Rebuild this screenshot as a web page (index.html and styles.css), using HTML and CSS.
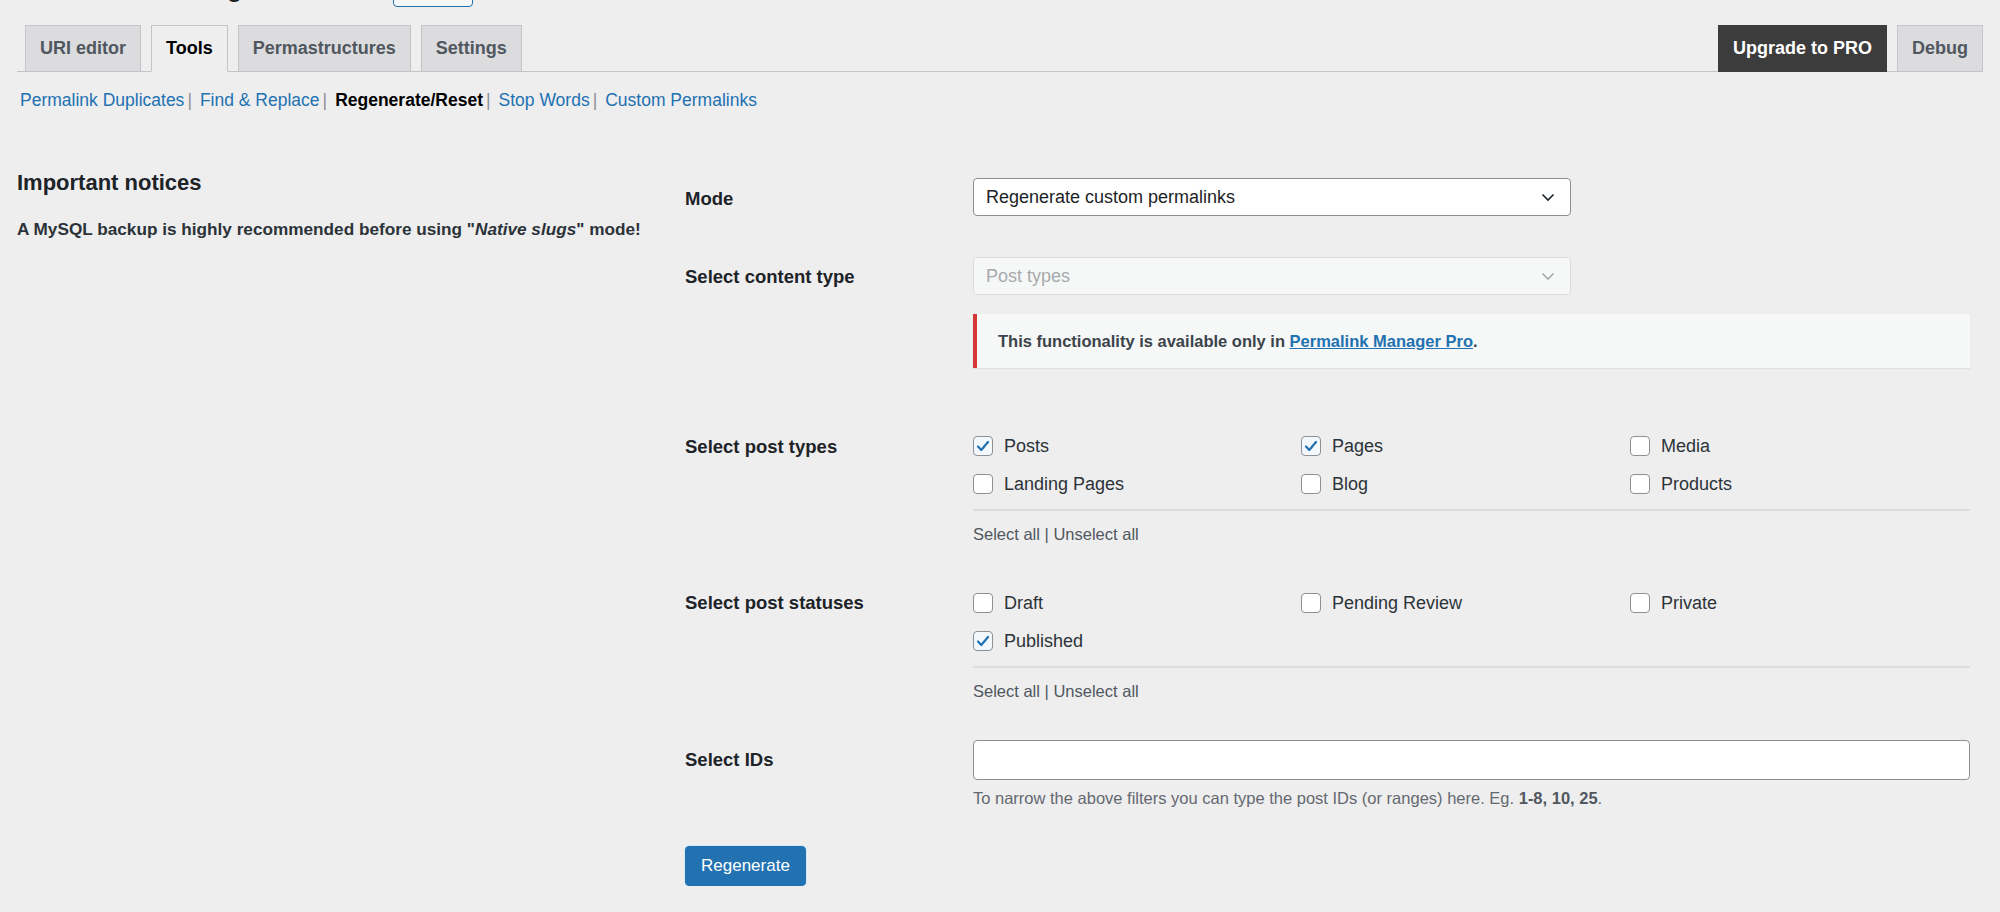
FILE: index.html
```html
<!DOCTYPE html>
<html lang="en">
<head>
    <meta charset="UTF-8">
    <meta name="viewport" content="width=device-width, initial-scale=1.0">
    <title>Permalink Manager - Tools</title>
    <link rel="stylesheet" href="styles.css">
</head>
<body>
<div class="wrap">
    <h1 class="page-title">Permalink Manager <span class="byline">by Maciej Bis</span> <a href="#" class="title-action">Go Pro</a></h1>

    <div class="tab-bar">
        <nav class="tabs">
            <a href="#" class="tab">URI editor</a>
            <a href="#" class="tab active">Tools</a>
            <a href="#" class="tab">Permastructures</a>
            <a href="#" class="tab">Settings</a>
        </nav>
        <div class="tab-actions">
            <a href="#" class="tab tab-pro">Upgrade to PRO</a>
            <a href="#" class="tab">Debug</a>
        </div>
    </div>

    <ul class="subnav">
        <li><a href="#">Permalink Duplicates</a><span class="sep">|</span></li>
        <li><a href="#">Find &amp; Replace</a><span class="sep">|</span></li>
        <li><a href="#" class="current">Regenerate/Reset</a><span class="sep">|</span></li>
        <li><a href="#">Stop Words</a><span class="sep">|</span></li>
        <li><a href="#">Custom Permalinks</a></li>
    </ul>

    <div class="columns">
        <aside class="notices">
            <h2>Important notices</h2>
            <p>A MySQL backup is highly recommended before using "<em>Native slugs</em>" mode!</p>
        </aside>

        <form class="tool-form">
            <div class="form-row row-mode">
                <div class="row-label">Mode</div>
                <div class="row-field">
                    <div class="select">
                        <span>Regenerate custom permalinks</span>
                        <svg width="14" height="9" viewBox="0 0 14 9"><path d="M1.5 1.5 7 7l5.5-5.5" fill="none" stroke="currentColor" stroke-width="1.6"/></svg>
                    </div>
                </div>
            </div>

            <div class="form-row row-content">
                <div class="row-label">Select content type</div>
                <div class="row-field">
                    <div class="select disabled">
                        <span>Post types</span>
                        <svg width="14" height="9" viewBox="0 0 14 9"><path d="M1.5 1.5 7 7l5.5-5.5" fill="none" stroke="currentColor" stroke-width="1.6"/></svg>
                    </div>
                    <div class="notice">
                        This functionality is available only in <a href="#">Permalink Manager Pro</a>.
                    </div>
                </div>
            </div>

            <div class="form-row row-checks">
                <div class="row-label">Select post types</div>
                <div class="row-field">
                    <div class="check-grid">
                        <label class="check"><span class="box checked"><svg width="14" height="12" viewBox="0 0 14 12"><path d="M2 6.5 5.3 10 12 2" fill="none" stroke="currentColor" stroke-width="2.2" stroke-linecap="round" stroke-linejoin="round"/></svg></span>Posts</label>
                        <label class="check"><span class="box checked"><svg width="14" height="12" viewBox="0 0 14 12"><path d="M2 6.5 5.3 10 12 2" fill="none" stroke="currentColor" stroke-width="2.2" stroke-linecap="round" stroke-linejoin="round"/></svg></span>Pages</label>
                        <label class="check"><span class="box"></span>Media</label>
                        <label class="check"><span class="box"></span>Landing Pages</label>
                        <label class="check"><span class="box"></span>Blog</label>
                        <label class="check"><span class="box"></span>Products</label>
                    </div>
                    <div class="select-links"><a href="#">Select all</a> | <a href="#">Unselect all</a></div>
                </div>
            </div>

            <div class="form-row row-statuses">
                <div class="row-label">Select post statuses</div>
                <div class="row-field">
                    <div class="check-grid">
                        <label class="check"><span class="box"></span>Draft</label>
                        <label class="check"><span class="box"></span>Pending Review</label>
                        <label class="check"><span class="box"></span>Private</label>
                        <label class="check"><span class="box checked"><svg width="14" height="12" viewBox="0 0 14 12"><path d="M2 6.5 5.3 10 12 2" fill="none" stroke="currentColor" stroke-width="2.2" stroke-linecap="round" stroke-linejoin="round"/></svg></span>Published</label>
                    </div>
                    <div class="select-links"><a href="#">Select all</a> | <a href="#">Unselect all</a></div>
                </div>
            </div>

            <div class="form-row row-ids">
                <div class="row-label">Select IDs</div>
                <div class="row-field">
                    <input type="text" class="text-input">
                    <p class="help">To narrow the above filters you can type the post IDs (or ranges) here. Eg. <strong>1-8, 10, 25</strong>.</p>
                </div>
            </div>

            <button type="button" class="btn-primary">Regenerate</button>
        </form>
    </div>
</div>
</body>
</html>
```

FILE: styles.css
```css
* {
    margin: 0;
    padding: 0;
    box-sizing: border-box;
}
body {
    background: #eeeeef;
    color: #1d2327;
    font-family: "Liberation Sans", Arial, sans-serif;
    font-size: 17px;
    overflow: hidden;
}
a {
    color: #2271b1;
    text-decoration: none;
}

.wrap {
    padding: 0 17px;
}

/* page title sits mostly above the fold */
.page-title {
    height: 36px;
    font-size: 29px;
    font-weight: 400;
    line-height: 36px;
    margin-top: -32px;
    margin-bottom: 21px;
    white-space: nowrap;
}
.byline {
    font-size: 17px;
    color: #646970;
}
.title-action {
    display: inline-block;
    position: relative;
    top: 1px;
    margin-left: 8px;
    padding: 4px 12px;
    line-height: 20px;
    font-size: 17px;
    border: 1px solid #2271b1;
    border-radius: 4px;
    background: #f6f7f7;
}

/* tabs */
.tab-bar {
    display: flex;
    justify-content: space-between;
    align-items: flex-end;
    border-bottom: 1px solid #c3c4c7;
}
.tabs,
.tab-actions {
    display: flex;
    gap: 10px;
}
.tabs {
    padding-left: 8px;
}
.tab {
    display: block;
    margin-bottom: -1px;
    padding: 10px 14px;
    line-height: 25px;
    font-size: 18px;
    font-weight: 700;
    color: #50575e;
    background: #dcdcde;
    border: 1px solid #c3c4c7;
}
.tab.active {
    color: #000;
    background: #eeeeef;
    border-bottom-color: #eeeeef;
}
.tab.tab-pro {
    color: #fff;
    background: #3c3c3c;
    border-color: #3c3c3c;
}

/* sub navigation */
.subnav {
    list-style: none;
    display: flex;
    margin-top: 16px;
    padding-left: 3px;
    line-height: 24px;
    font-size: 17.5px;
}
.subnav .sep {
    color: #8c8f94;
    margin: 0 8px 0 3px;
}
.subnav .current {
    color: #000;
    font-weight: 700;
}

/* two column layout */
.columns {
    display: grid;
    grid-template-columns: 668px 1fr;
    margin-top: 52px;
}
.notices {
    padding-top: 5px;
}
.notices h2 {
    font-size: 22px;
    line-height: 28px;
    font-weight: 700;
    margin-bottom: 20px;
}
.notices p {
    font-size: 17.2px;
    line-height: 24px;
    font-weight: 700;
    color: #2c3338;
}

.tool-form {
    padding-right: 13px;
}
.form-row {
    display: grid;
    grid-template-columns: 288px 1fr;
}
.row-label {
    font-size: 18.5px;
    line-height: 24px;
    font-weight: 700;
}
.row-field {
    padding: 20px 0 18px;
}
.row-mode .row-label { padding-top: 23px; }
.row-mode .row-field { padding: 14px 0 20px; }
.row-content .row-label { padding-top: 29px; }
.row-content .row-field { padding: 21px 0 20px; }
.row-checks .row-label { padding-top: 28px; }
.row-statuses .row-label { padding-top: 27px; }
.row-ids .row-label { padding-top: 27px; }
.row-ids .row-field { padding-top: 19px; }

/* select boxes */
.select {
    width: 598px;
    height: 38px;
    display: flex;
    align-items: center;
    justify-content: space-between;
    padding: 0 15px 0 12px;
    font-size: 18px;
    color: #1d2327;
    background: #fff;
    border: 1px solid #8c8f94;
    border-radius: 4px;
}
.select.disabled {
    color: #a7aaad;
    background: #f6f7f7;
    border-color: #dcdcde;
}

/* upsell notice */
.notice {
    margin: 19px 0 19px;
    padding: 15px 20px 15px 21px;
    line-height: 24px;
    font-size: 16.5px;
    font-weight: 700;
    color: #3c434a;
    background: #f6f7f7;
    border-left: 4px solid #d63638;
    box-shadow: 0 1px 1px rgba(0, 0, 0, 0.06);
}
.notice a {
    text-decoration: underline;
    color: #2271b1;
}

/* checkbox lists */
.check-grid {
    display: grid;
    grid-template-columns: 328px 329px 1fr;
    padding-bottom: 6px;
    border-bottom: 2px solid #dcdcde;
}
.check {
    display: flex;
    align-items: center;
    gap: 11px;
    height: 38px;
    font-size: 18px;
    color: #2c3338;
}
.box {
    width: 20px;
    height: 20px;
    display: flex;
    align-items: center;
    justify-content: center;
    background: #fff;
    border: 1px solid #8c8f94;
    border-radius: 4px;
}
.box.checked {
    color: #2271b1;
    background: #f3f8fc;
}
.select-links {
    margin-top: 11px;
    line-height: 24px;
    font-size: 16.5px;
    color: #50575e;
}
.select-links a {
    color: #50575e;
}

/* ids field */
.text-input {
    display: block;
    width: 100%;
    height: 40px;
    background: #fff;
    border: 1px solid #8c8f94;
    border-radius: 4px;
}
.help {
    margin-top: 6px;
    line-height: 24px;
    font-size: 16.5px;
    color: #646970;
}
.help strong {
    color: #50575e;
}

.btn-primary {
    margin-top: 18px;
    height: 40px;
    padding: 0 15px;
    font-family: inherit;
    font-size: 17px;
    color: #fff;
    background: #2271b1;
    border: 1px solid #2271b1;
    border-radius: 4px;
    box-shadow: 0 0 0 1px #d3ebf8;
}
```
